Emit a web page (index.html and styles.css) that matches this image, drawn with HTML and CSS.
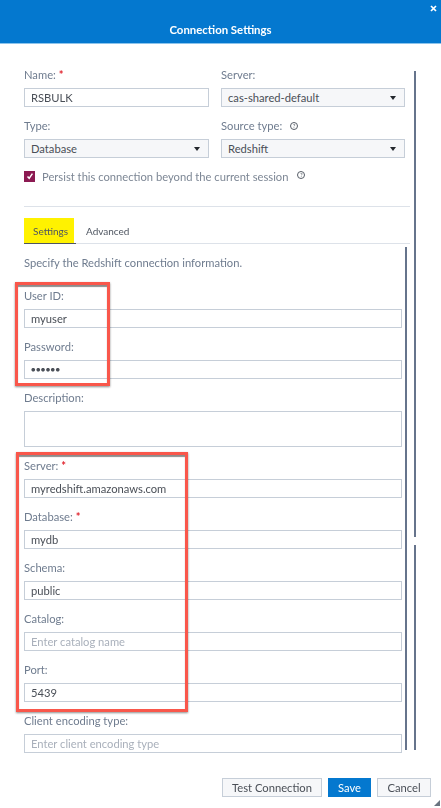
FILE: index.html
```html
<!DOCTYPE html>
<html lang="en">
<head>
    <meta charset="UTF-8">
    <meta name="viewport" content="width=device-width, initial-scale=1.0">
    <title>Connection Settings</title>
    <link rel="stylesheet" href="styles.css">
</head>
<body>
    <div class="dialog">
        <div class="header">
            <svg class="close" width="7" height="7" viewBox="0 0 7 7"><path d="M1 1 6 6M6 1 1 6" stroke="#fff" stroke-width="1.7"/></svg>
            <h1>Connection Settings</h1>
        </div>

        <div class="content">
            <div class="top-grid">
                <div class="field">
                    <div class="label">Name: <span class="req">*</span></div>
                    <div class="input">RSBULK</div>
                </div>
                <div class="field">
                    <div class="label">Server:</div>
                    <div class="input select">cas-shared-default</div>
                </div>
                <div class="field">
                    <div class="label">Type:</div>
                    <div class="input select">Database</div>
                </div>
                <div class="field">
                    <div class="label">Source type: <span class="help">?</span></div>
                    <div class="input select">Redshift</div>
                </div>
            </div>

            <div class="persist">
                <span class="checkbox">
                    <svg width="8" height="8" viewBox="0 0 8 8"><path d="M1.5 4.4 3.2 6.3 6.4 1.6" fill="none" stroke="#fff" stroke-width="1.5"/></svg>
                </span>
                <span>Persist this connection beyond the current session</span>
                <span class="help persist-help">?</span>
            </div>

            <div class="divider"></div>

            <div class="tabs">
                <div class="tab active">Settings</div>
                <div class="tab">Advanced</div>
            </div>

            <p class="intro">Specify the Redshift connection information.</p>

            <div class="fields">
                <div class="field">
                    <div class="label">User ID:</div>
                    <div class="input">myuser</div>
                </div>
                <div class="field">
                    <div class="label">Password:</div>
                    <div class="input dots">●●●●●●</div>
                </div>
                <div class="field">
                    <div class="label">Description:</div>
                    <div class="input textarea"></div>
                </div>
                <div class="field">
                    <div class="label">Server: <span class="req">*</span></div>
                    <div class="input">myredshift.amazonaws.com</div>
                </div>
                <div class="field">
                    <div class="label">Database: <span class="req">*</span></div>
                    <div class="input">mydb</div>
                </div>
                <div class="field">
                    <div class="label">Schema:</div>
                    <div class="input">public</div>
                </div>
                <div class="field">
                    <div class="label">Catalog:</div>
                    <div class="input placeholder">Enter catalog name</div>
                </div>
                <div class="field">
                    <div class="label">Port:</div>
                    <div class="input">5439</div>
                </div>
                <div class="field">
                    <div class="label">Client encoding type:</div>
                    <div class="input placeholder">Enter client encoding type</div>
                </div>
            </div>
        </div>

        <div class="footer">
            <div class="btn test">Test Connection</div>
            <div class="btn primary">Save</div>
            <div class="btn cancel">Cancel</div>
        </div>

        <!-- scrollbars and the red callouts lie over the form -->
        <div class="scroll outer-a"></div>
        <div class="scroll outer-b"></div>
        <div class="scroll inner"></div>
        <div class="callout login"></div>
        <div class="callout server"></div>
        <div class="grip"></div>
    </div>
</body>
</html>
```

FILE: styles.css
```css
* {
    box-sizing: border-box;
}
body {
    margin: 0;
    background: white;
    font-family: Lato, "Open Sans", sans-serif;
    font-size: 11.2px;
    color: #4a4f57;
}
.dialog {
    position: relative;
    width: 441px;
    height: 808px;
    overflow: hidden;
    filter: blur(0.5px);
}
.header {
    height: 44px;
    background: #0478cf;
    border-bottom: 1px solid #8cc4ec;
    color: white;
    padding-top: 21px;
    text-align: center;
}
.header h1 {
    margin: 0;
    font-size: 11.4px;
    line-height: 18px;
    font-weight: 700;
}
.close {
    position: absolute;
    top: 5px;
    right: 4px;
}
.content {
    padding: 23px 39px 0 24px;
    height: 709px;
}
.top-grid {
    display: grid;
    grid-template-columns: 185px 184px;
    column-gap: 12px;
    row-gap: 11px;
    width: 381px;
}
.field .label {
    height: 16px;
    line-height: 16px;
    margin-bottom: 5px;
    color: #6f7c8f;
}
.req {
    color: #e0202a;
    font-weight: 700;
}
.input {
    height: 19px;
    line-height: 17px;
    padding: 0 6px;
    border: 1px solid #c6ced8;
    background: white;
    white-space: nowrap;
}
.select {
    position: relative;
    background: #f6f7f9;
}
.select::after {
    content: "";
    position: absolute;
    right: 8px;
    top: 7px;
    border-left: 3px solid transparent;
    border-right: 3px solid transparent;
    border-top: 4px solid #23272d;
}
.help {
    display: inline-block;
    width: 8px;
    height: 8px;
    margin-left: 5px;
    border: 1px solid #555c66;
    border-radius: 50%;
    color: #555c66;
    font-size: 6px;
    line-height: 6px;
    text-align: center;
    vertical-align: 2px;
}
.persist {
    display: flex;
    align-items: center;
    height: 16px;
    margin-top: 10px;
    color: #7d8795;
}
.checkbox {
    display: flex;
    align-items: center;
    justify-content: center;
    width: 11px;
    height: 11px;
    margin-right: 7px;
    background: #8c1a52;
}
.persist-help {
    margin-left: 9px;
    margin-bottom: 3px;
}
.divider {
    width: 386px;
    height: 1px;
    margin-top: 22px;
    background: #dde2e9;
}
.tabs {
    display: flex;
    width: 386px;
    height: 26px;
    margin-top: 11px;
    border-bottom: 1px solid #dde2e9;
    font-size: 10px;
}
.tab {
    padding: 0 10px;
    line-height: 26px;
    color: #4f5661;
}
.tab.active {
    width: 52px;
    height: 26px;
    padding: 0 0 0 9px;
    background: linear-gradient(#fff200, #fff200) no-repeat 0 0 / 50px 25px;
    border-bottom: 1px solid #4f5661;
}
.intro {
    margin: 11px 0 17px;
    line-height: 16px;
    color: #6f7c8f;
}
.fields {
    display: flex;
    flex-direction: column;
    gap: 11px;
}
.textarea {
    height: 36px;
}
.dots {
    font-size: 7.5px;
    letter-spacing: 0.4px;
}
.placeholder {
    color: #a9b0bb;
}
.footer {
    display: flex;
    justify-content: flex-end;
    gap: 6px;
    padding: 25px 10px 0 0;
}
.btn {
    height: 19px;
    line-height: 17px;
    border: 1px solid #c6ced8;
    background: #f6f7f9;
    text-align: center;
}
.btn.test {
    width: 100px;
}
.btn.primary {
    width: 43px;
    background: #0478cf;
    border-color: #0478cf;
    color: white;
}
.btn.cancel {
    width: 54px;
}
.scroll {
    position: absolute;
    width: 2px;
    background: #66748c;
}
.outer-a {
    left: 414px;
    top: 71px;
    height: 466px;
}
.outer-b {
    left: 414px;
    top: 545px;
    height: 205px;
}
.inner {
    left: 405px;
    top: 247px;
    height: 503px;
}
.callout {
    position: absolute;
    border: 3px solid #f9574b;
    box-shadow: 0 1px 2px rgba(0,0,0,0.45), inset 0 2px 1px rgba(0,0,0,0.45);
}
.login {
    left: 15px;
    top: 282px;
    width: 95px;
    height: 104px;
}
.server {
    left: 16px;
    top: 452px;
    width: 172px;
    height: 260px;
}
.grip {
    position: absolute;
    right: 1px;
    bottom: 2px;
    width: 6px;
    height: 6px;
    background: radial-gradient(circle, #66707d 0.7px, transparent 1px) 0 0 / 2px 2px;
    clip-path: polygon(100% 0, 100% 100%, 0 100%);
}
```
